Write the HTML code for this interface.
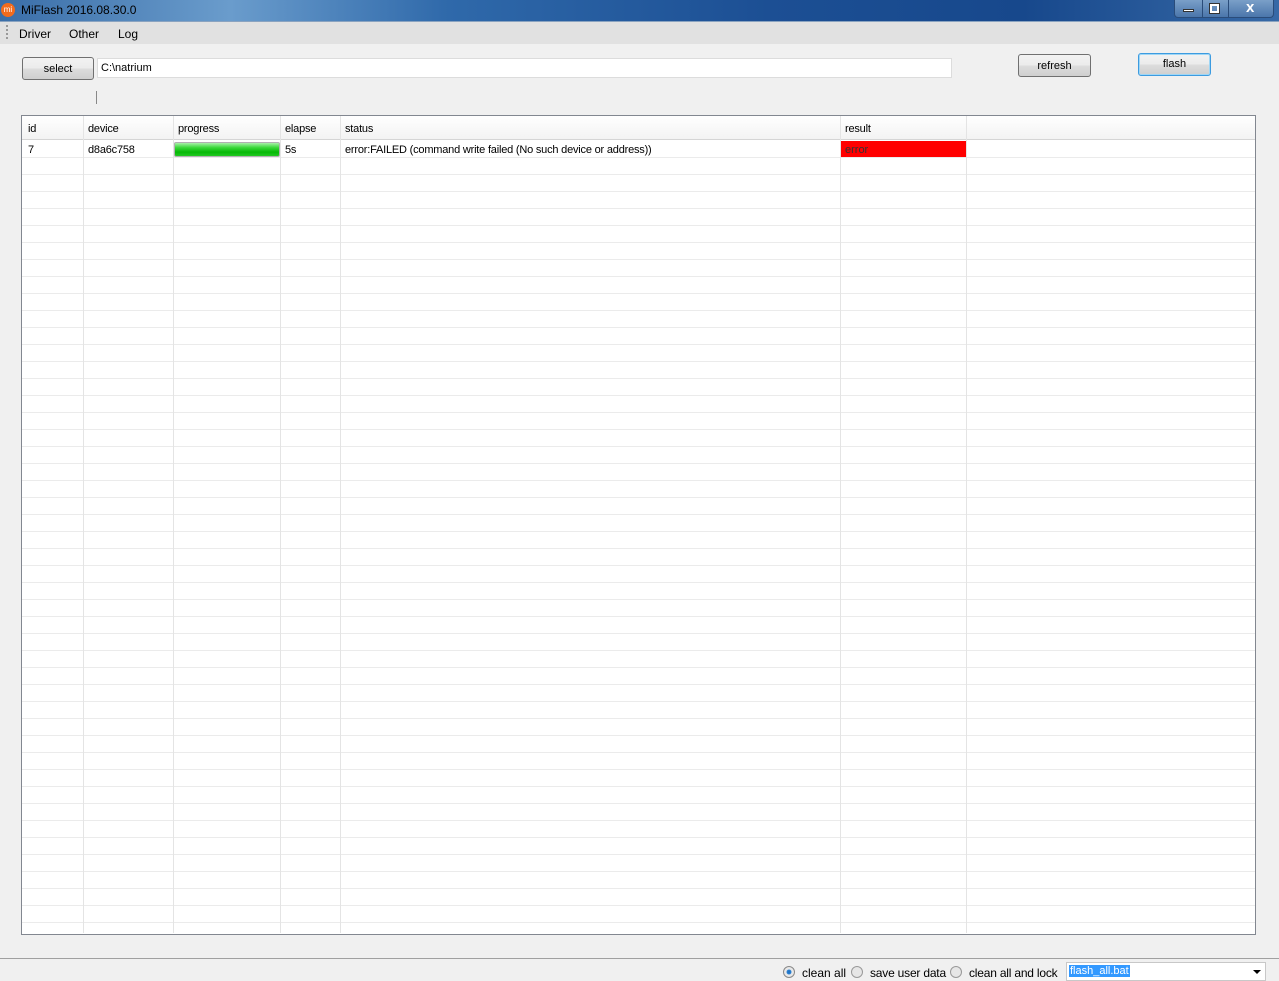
<!DOCTYPE html><html><head><style>
*{margin:0;padding:0;box-sizing:border-box}
body{width:1279px;height:981px;background:#f0f0f0;font-family:"Liberation Sans",sans-serif;font-size:11px;position:relative;overflow:hidden;color:#000}
.a{position:absolute}
.btn{position:absolute;border:1px solid #707070;border-radius:3px;background:linear-gradient(#f2f2f2 0,#ebebeb 50%,#dddddd 51%,#cfcfcf);text-align:center;font-size:11px}
.col{position:absolute;top:116px;bottom:1px;border-left:1px solid #e4e4e4}
.h{position:absolute;top:7px;font-size:11px;letter-spacing:-0.2px}
</style></head><body>
<div class="a" style="left:0;top:0;width:1279px;height:21px;background:linear-gradient(90deg,#3a6ea8 0,#6a9ccc 18%,#2f69aa 35%,#1c4f94 60%,#17488c 80%,#3769a6 100%)"></div>
<div class="a" style="left:1px;top:3px;width:14px;height:14px;border-radius:50%;background:#f26b1d;color:#fff;font-size:8px;line-height:14px;text-align:center">mi</div>
<div class="a" style="left:21px;top:3px;font-size:12px;color:#000">MiFlash 2016.08.30.0</div>
<div class="a" style="left:1174px;top:0;width:100px;height:18px;border:1px solid #2a4c7a;border-top:none;border-radius:0 0 4px 4px;background:linear-gradient(#7a9fc8,#4b76ab)"></div>
<div class="a" style="left:1202px;top:0;width:1px;height:17px;background:#2a4c7a"></div>
<div class="a" style="left:1228px;top:0;width:1px;height:17px;background:#2a4c7a"></div>
<div class="a" style="left:1183px;top:9px;width:11px;height:3px;background:#fff;border:1px solid #333"></div>
<div class="a" style="left:1210px;top:4px;width:9px;height:9px;border:2px solid #fff;outline:1px solid #333"></div>
<div class="a" style="left:1246px;top:-1px;color:#fff;font-weight:bold;font-size:15px">x</div>
<div class="a" style="left:0;top:21px;width:1279px;height:1px;background:#8aa3c0"></div>
<div class="a" style="left:0;top:22px;width:1279px;height:22px;background:#e1e1e1"></div>
<div class="a" style="left:6px;top:25px;width:2px;height:14px;border-left:2px dotted #999"></div>
<div class="a" style="left:19px;top:27px;font-size:12px">Driver</div>
<div class="a" style="left:69px;top:27px;font-size:12px">Other</div>
<div class="a" style="left:118px;top:27px;font-size:12px">Log</div>
<div class="btn" style="left:22px;top:57px;width:72px;height:23px;line-height:22px">select</div>
<div class="a" style="left:97px;top:58px;width:855px;height:20px;background:#fff;border:1px solid #dcdcdc;padding:3px 3px;font-size:11px">C:\natrium</div>
<div class="a" style="left:96px;top:91px;width:1px;height:13px;background:#888"></div>
<div class="btn" style="left:1018px;top:54px;width:73px;height:23px;line-height:22px">refresh</div>
<div class="btn" style="left:1138px;top:53px;width:73px;height:23px;line-height:21px;border-color:#3c9be0;box-shadow:inset 0 0 0 1px #9fd6f5">flash</div>
<div class="a" style="left:21px;top:115px;width:1235px;height:820px;border:1px solid #828790;background:#fff;overflow:hidden">
 <div class="a" style="left:0;top:0;width:1233px;height:24px;background:linear-gradient(#fff,#f3f3f3);border-bottom:1px solid #d5d5d5"></div>
 <div class="a" style="left:0;top:25px;width:1233px;height:800px;background:repeating-linear-gradient(#fff 0,#fff 16px,#ebebeb 16px,#ebebeb 17px)"></div>
 <div class="col" style="left:61px;top:0"></div><div class="col" style="left:151px;top:0"></div><div class="col" style="left:258px;top:0"></div><div class="col" style="left:318px;top:0"></div><div class="col" style="left:818px;top:0"></div><div class="col" style="left:944px;top:0"></div>
 <div class="h" style="left:6px">id</div><div class="h" style="left:66px">device</div><div class="h" style="left:156px">progress</div><div class="h" style="left:263px">elapse</div><div class="h" style="left:323px">status</div><div class="h" style="left:823px">result</div>
 <div class="h" style="left:6px;top:28px">7</div><div class="h" style="left:66px;top:28px">d8a6c758</div>
 <div class="a" style="left:152px;top:26px;width:106px;height:15px;border:1px solid #b0b0b0;border-radius:2px;background:linear-gradient(#a8f0a8 0,#3ad83a 35%,#06b806 70%,#22c822)"></div>
 <div class="h" style="left:263px;top:28px">5s</div>
 <div class="h" style="left:323px;top:28px">error:FAILED (command write failed (No such device or address))</div>
 <div class="a" style="left:819px;top:25px;width:125px;height:16px;background:#ff0000;padding:3px 4px;font-size:11px;color:#333">error</div>
</div>
<div class="a" style="left:0;top:958px;width:1279px;height:1px;background:#a0a0a0"></div>
<div class="a" style="left:0;top:959px;width:1279px;height:22px;background:#f0f0f0"></div>
<div class="a" style="left:783px;top:966px;width:12px;height:12px;border-radius:50%;border:1px solid #888;background:radial-gradient(#1a6ec0 0,#2a7fd0 30%,#e8e8e8 40%)"></div>
<div class="a" style="left:802px;top:966px;font-size:12px">clean all</div>
<div class="a" style="left:851px;top:966px;width:12px;height:12px;border-radius:50%;border:1px solid #999;background:#e6e6e6"></div>
<div class="a" style="left:870px;top:966px;font-size:12px;letter-spacing:-0.2px">save user data</div>
<div class="a" style="left:950px;top:966px;width:12px;height:12px;border-radius:50%;border:1px solid #999;background:#e6e6e6"></div>
<div class="a" style="left:969px;top:966px;font-size:12px;letter-spacing:-0.2px">clean all and lock</div>
<div class="a" style="left:1066px;top:962px;width:200px;height:19px;background:#fff;border:1px solid #c8c8c8"></div>
<div class="a" style="left:1069px;top:965px;font-size:11px;background:#3399ff;color:#fff;padding:0 1px">flash_all.bat</div>
<div class="a" style="left:1253px;top:970px;width:0;height:0;border-left:4px solid transparent;border-right:4px solid transparent;border-top:4px solid #000"></div>
</body></html>
